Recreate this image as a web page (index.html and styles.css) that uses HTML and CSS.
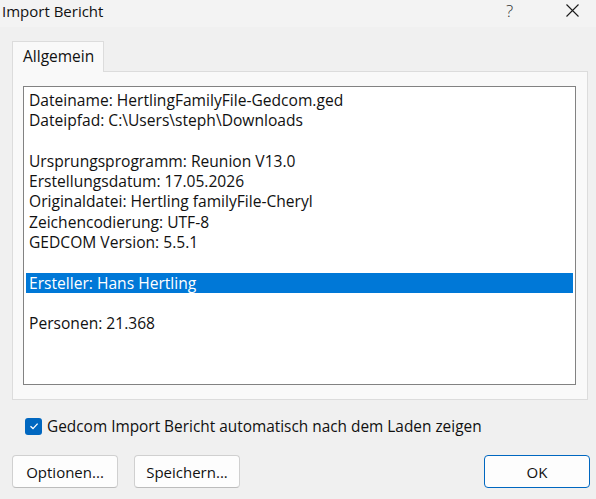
FILE: index.html
```html
<!doctype html>
<html>
<head>
	<meta charset="utf-8">
	<title>Import Bericht</title>
	<link rel="stylesheet" href="styles.css">
</head>
<body>
	<div class="dialog">
		<div class="titlebar">
			<span class="title">Import Bericht</span>
			<span class="help">?</span>
			<span class="close">
				<svg width="13" height="13" viewBox="0 0 13 13"><path d="M0.5 0.5L12.5 12.5M12.5 0.5L0.5 12.5" stroke="#1a1a1a" stroke-width="1.1" fill="none"/></svg>
			</span>
		</div>

		<div class="tabs">
			<div class="tab active">Allgemein</div>
		</div>
		<div class="panel">
			<div class="listbox">
				<div class="line">Dateiname: HertlingFamilyFile-Gedcom.ged</div>
				<div class="line">Dateipfad: C:\Users\steph\Downloads</div>
				<div class="line"></div>
				<div class="line">Ursprungsprogramm: Reunion V13.0</div>
				<div class="line">Erstellungsdatum: 17.05.2026</div>
				<div class="line">Originaldatei: Hertling familyFile-Cheryl</div>
				<div class="line">Zeichencodierung: UTF-8</div>
				<div class="line">GEDCOM Version: 5.5.1</div>
				<div class="line"></div>
				<div class="line selected">Ersteller: Hans Hertling</div>
				<div class="line"></div>
				<div class="line">Personen: 21.368</div>
			</div>
		</div>

		<label class="check">
			<span class="box">
				<svg width="12" height="12" viewBox="0 0 12 12"><path d="M2.5 6.3L5 8.6L9.6 3.6" stroke="#fff" stroke-width="1.3" fill="none"/></svg>
			</span>
			Gedcom Import Bericht automatisch nach dem Laden zeigen
		</label>

		<div class="buttons">
			<button class="btn">Optionen...</button>
			<button class="btn">Speichern...</button>
			<span class="spacer"></span>
			<button class="btn default">OK</button>
		</div>
	</div>
</body>
</html>
```

FILE: styles.css
```css
* { margin: 0; padding: 0; box-sizing: border-box; }
body { background: #f0f0f0; font-family: "Open Sans", "Noto Sans", sans-serif; font-size: 14px; color: #111; }

.dialog { width: 596px; height: 499px; background: #f0f0f0; }

.titlebar { display: flex; align-items: flex-start; height: 27px; padding-left: 2px; background: #f3f3f3; }
.title { flex: 1; font-size: 15px; line-height: 22px; }
.help { width: 10px; margin-right: 50px; font-size: 17px; line-height: 22px; color: #333; font-weight: 300; }
.close { width: 13px; margin: 4px 17px 0 0; display: flex; }

.tabs { display: flex; margin: 14px 0 0 12px; }
.tab { width: 92px; height: 31px; padding-left: 10px; line-height: 29px; font-size: 15.5px; background: #f9f9f9; border: 1px solid #dcdcdc; border-bottom: none; margin-bottom: -1px; position: relative; z-index: 1; }

.panel { margin: 0 8px 0 12px; height: 329px; padding: 14px 11px 15px 10px; background: #f9f9f9; border: 1px solid #dcdcdc; }

.listbox { height: 299px; background: #fff; border: 1px solid #828282; padding: 3px 2px 0 2px; }
.line { height: 20.3px; line-height: 20px; padding-left: 3px; white-space: nowrap; font-size: 15.6px; }
.selected { background: #0078d7; color: #fff; }

.check { display: flex; align-items: center; gap: 5px; margin: 17px 0 0 25px; height: 18px; font-size: 15.4px; }
.box { width: 17px; height: 17px; border-radius: 3px; background: #0067c0; display: flex; align-items: center; justify-content: center; }

.buttons { display: flex; gap: 16px; margin: 20px 6px 0 12px; }
.spacer { flex: 1; }
.btn { width: 106px; height: 33px; font: inherit; font-size: 15px; color: #111; background: #fdfdfd; border: 1px solid #d0d0d0; border-bottom-color: #bcbcbc; border-radius: 4px; }
.btn.default { border: 1.5px solid #0067c0; }
```
